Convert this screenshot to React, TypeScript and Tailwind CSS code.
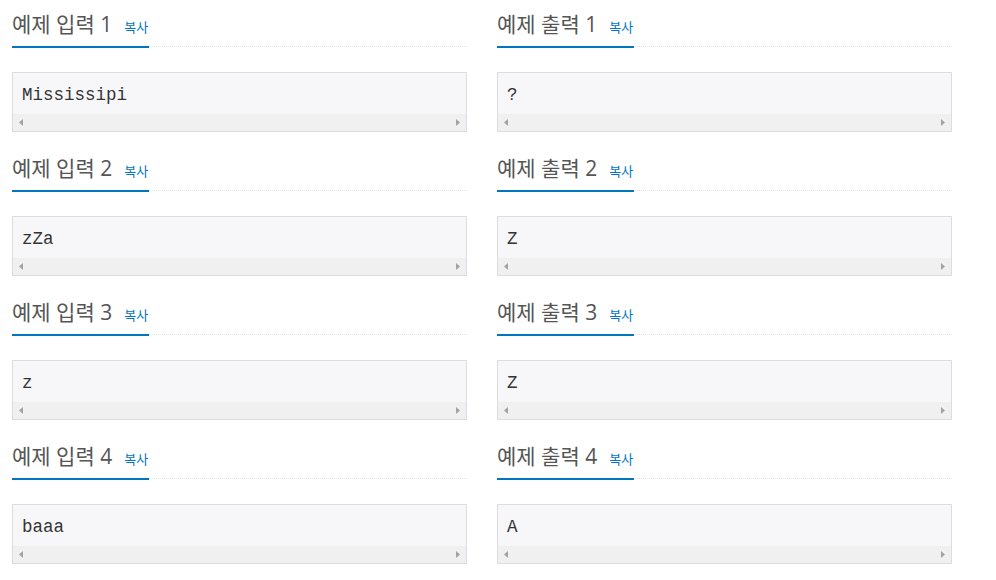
const samples = [
  { input: 'Mississipi', output: '?' },
  { input: 'zZa', output: 'Z' },
  { input: 'z', output: 'Z' },
  { input: 'baaa', output: 'A' },
];

function Arrow({ dir }: { dir: 'left' | 'right' }) {
  return (
    <svg width="4" height="7" viewBox="0 0 4 7" className="block">
      {dir === 'left' ? (
        <polygon points="4,0 4,7 0,3.5" fill="#a3a3a3" />
      ) : (
        <polygon points="0,0 0,7 4,3.5" fill="#a3a3a3" />
      )}
    </svg>
  );
}

function Sample({ title, text }: { title: string; text: string }) {
  return (
    <div className="pb-[12px]">
      {/* headline */}
      <div className="flex pt-[10px] border-b border-dotted border-[#dfe3e8]">
        <div className="flex items-baseline h-[38px] leading-[28px] pb-[8px] pr-[1px] border-b-2 border-[#0076c0] -mb-[2px] overflow-hidden">
          <span className="text-[21px] text-[#555]">{title}</span>
          <span className="ml-[12px] text-[13px] text-[#0076c0]">복사</span>
        </div>
      </div>

      {/* pre box */}
      <div className="mt-[25px] border border-[#dcdce2] bg-[#f7f7f9]">
        <div
          className="h-[41px] flex items-center pt-[4px] px-[9px] text-[17.5px] text-[#333]"
          style={{ fontFamily: '"Liberation Mono", "DejaVu Sans Mono", monospace' }}
        >
          {text}
        </div>
        <div className="h-[17px] bg-[#f0f0f0] flex items-center justify-between px-[6px]">
          <Arrow dir="left" />
          <Arrow dir="right" />
        </div>
      </div>
    </div>
  );
}

export default function App() {
  return (
    <div
      className="min-h-screen bg-white pl-[12px]"
      style={{ fontFamily: '"Open Sans", "Noto Sans CJK KR", sans-serif' }}
    >
      <div className="grid grid-cols-[455px_455px] gap-x-[30px]">
        {samples.map((s, i) => (
          <div key={'in' + i} className="contents">
            <Sample title={`예제 입력 ${i + 1}`} text={s.input} />
            <Sample title={`예제 출력 ${i + 1}`} text={s.output} />
          </div>
        ))}
      </div>
    </div>
  );
}
